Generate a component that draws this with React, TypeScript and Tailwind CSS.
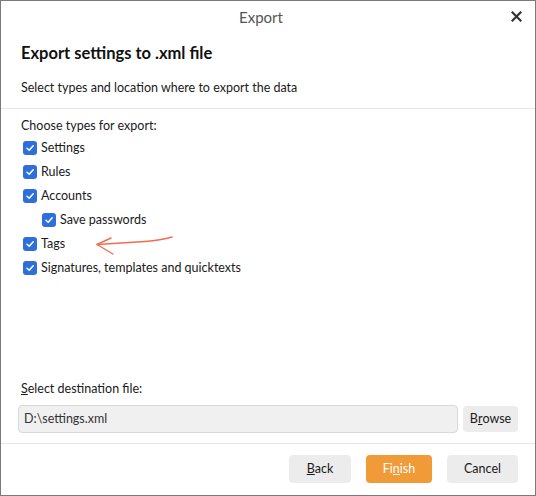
import React from "react";

function Check({ className = "" }: { className?: string }) {
  return (
    <span className={"flex h-[14px] w-[14px] shrink-0 items-center justify-center rounded-[3px] bg-[#2f6fdc] " + className}>
      <svg width="10" height="10" viewBox="0 0 10 10" fill="none">
        <path d="M2 5.2 L4.2 7.3 L8.2 2.8" stroke="white" strokeWidth="1.5" strokeLinecap="round" strokeLinejoin="round" />
      </svg>
    </span>
  );
}

function Row({ label, indent = false }: { label: string; indent?: boolean }) {
  return (
    <div className={"flex h-[24px] items-center gap-[4px] " + (indent ? "pl-[21px]" : "pl-[2px]")}>
      <Check />
      <span>{label}</span>
    </div>
  );
}

export default function App() {
  return (
    <div
      className="flex h-[496px] w-[536px] flex-col border border-[#7a7a7a] bg-white text-[12.5px] text-[#1a1a1a]"
      style={{ fontFamily: '"Segoe UI", Lato, "Noto Sans", sans-serif' }}
    >
      <div className="relative flex h-[32px] shrink-0 items-center justify-center pr-[14px]">
        <span className="text-[15px] text-[#555]">Export</span>
        <svg className="absolute right-[13px] top-[10px]" width="11" height="11" viewBox="0 0 11 11">
          <path d="M1.5 1.5 L9.5 9.5 M9.5 1.5 L1.5 9.5" stroke="#333" strokeWidth="2.2" strokeLinecap="square" />
        </svg>
      </div>
      <div className="px-[20px]">
        <div className="mt-[7px] text-[16.5px] font-bold leading-[26px] text-[#111]">Export settings to .xml file</div>
        <div className="mt-[13px] leading-[18px]">Select types and location where to export the data</div>
      </div>
      <div className="mt-[11px] h-px bg-[#e6e6e6]" />
      <div className="relative px-[20px] pt-[8px]">
        <div className="h-[18px] leading-[18px]">Choose types for export:</div>
        <div className="mt-[1px] flex flex-col">
          <Row label="Settings" />
          <Row label="Rules" />
          <Row label="Accounts" />
          <Row label="Save passwords" indent />
          <Row label="Tags" />
          <Row label="Signatures, templates and quicktexts" />
        </div>
        <svg className="absolute left-[94px] top-[126px]" width="82" height="22" viewBox="0 0 82 22" fill="none">
          <path d="M2 9.5 C 20 8.5, 35 7.5, 50 6.5 C 62 5.5, 70 4, 77 2" stroke="#f26d50" strokeWidth="1.4" strokeLinecap="round" />
          <path d="M2 9.5 L 16 3 M2 9.5 L 18 19" stroke="#f26d50" strokeWidth="1.4" strokeLinecap="round" />
        </svg>
      </div>
      <div className="flex-1" />
      <div className="px-[17px]">
        <div className="pl-[3px] leading-[18px]"><span className="underline">S</span>elect destination file:</div>
        <div className="mt-[7px] flex items-center gap-[5px]">
          <div className="flex h-[28px] flex-1 items-center rounded-[4px] border border-[#d9d9d9] bg-[#f0f0f0] px-[5px] text-[#333]">D:\settings.xml</div>
          <div className="flex h-[26px] w-[55px] items-center justify-center rounded-[4px] bg-[#ececec]">B<span className="underline">r</span>owse</div>
        </div>
      </div>
      <div className="mt-[10px] h-px bg-[#e6e6e6]" />
      <div className="flex h-[51px] items-center justify-end gap-[15px] px-[17px] pb-[1px]">
        <div className="flex h-[28px] w-[62px] items-center justify-center rounded-[4px] bg-[#ececec]"><span className="underline">B</span>ack</div>
        <div className="flex h-[28px] w-[66px] items-center justify-center rounded-[4px] bg-[#f09a38] text-white">Fi<span className="underline">n</span>ish</div>
        <div className="flex h-[28px] w-[71px] items-center justify-center rounded-[4px] bg-[#ececec]">Cancel</div>
      </div>
    </div>
  );
}
